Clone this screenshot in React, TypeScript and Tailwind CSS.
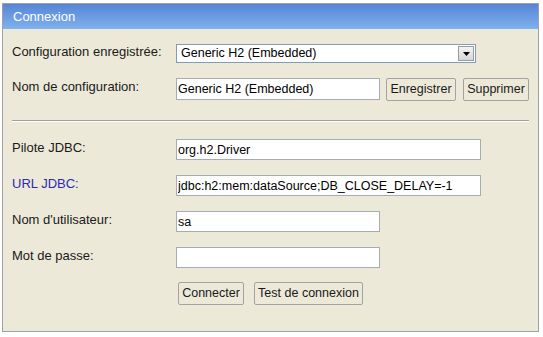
import { useState } from 'react'

const font = "font-['Liberation_Sans',Arial,sans-serif]"

function Field({ label, value, width, blue }: { label: string; value: string; width: string; blue?: boolean }) {
  return (
    <div className="flex items-start">
      <span className={`w-[164px] leading-[15px] pt-[1px] ${blue ? 'text-[#2b2bb8]' : 'text-[#1a1a1a]'}`}>{label}</span>
      <input
        defaultValue={value}
        className={`${width} h-[21px] border border-[#a5acb2] bg-white px-[1px] text-[12.5px] text-black outline-none`}
      />
    </div>
  )
}

function Btn({ children, w }: { children: string; w: string }) {
  return (
    <button className={`${w} h-[23px] rounded-[2px] border border-[#a3a3a3] bg-[#ece9d8] text-[12.5px] text-[#1a1a1a] leading-none`}>
      {children}
    </button>
  )
}

export default function App() {
  const [conf] = useState('Generic H2 (Embedded)')

  return (
    <div className={`w-[543px] h-[337px] bg-white pl-[2px] pt-[3px] text-[13px] ${font}`}>
      <div className="w-[537px] h-[329px] border border-[#a0a0a0] bg-[#ece9d8] flex flex-col">
        {/* Title bar */}
        <div className="h-[25px] bg-gradient-to-b from-[#5785d6] to-[#7fb2ee] text-white pl-[10px] flex items-center">
          Connexion
        </div>

        <div className="pl-[9px] pt-[15px] flex flex-col">
          {/* Saved config */}
          <div className="flex items-start">
            <span className="w-[164px] leading-[15px] text-[#1a1a1a]">Configuration enregistrée:</span>
            <div className="w-[300px] h-[19px] border border-[#7f9db9] bg-white flex items-center justify-between">
              <span className="pl-[4px] leading-none text-[12.5px] text-black">{conf}</span>
              <span className="w-[16px] h-[15px] mr-[1px] border border-[#9a9a9a] bg-gradient-to-b from-[#f4f4f4] to-[#d6d6d6] flex items-center justify-center">
                <svg width="7" height="4" viewBox="0 0 7 4"><path d="M0 0h7L3.5 4z" fill="#000" /></svg>
              </span>
            </div>
          </div>

          {/* Config name */}
          <div className="flex items-start mt-[15px]">
            <span className="w-[164px] leading-[15px] pt-[1px] text-[#1a1a1a]">Nom de configuration:</span>
            <input
              defaultValue={conf}
              className="w-[204px] h-[22px] border border-[#a5acb2] bg-white px-[1px] text-[12.5px] text-black outline-none"
            />
            <div className="flex gap-[7px] ml-[6px]">
              <Btn w="w-[70px]">Enregistrer</Btn>
              <Btn w="w-[66px]">Supprimer</Btn>
            </div>
          </div>

          <div className="mt-[19px] mr-[9px] h-[2px] border-t border-[#a0a0a0] border-b border-b-white" />

          <div className="flex flex-col gap-[15px] mt-[17px]">
            <Field label="Pilote JDBC:" value="org.h2.Driver" width="w-[305px]" />
            <Field label="URL JDBC:" value="jdbc:h2:mem:dataSource;DB_CLOSE_DELAY=-1" width="w-[305px]" blue />
            <Field label="Nom d'utilisateur:" value="sa" width="w-[204px]" />
            <Field label="Mot de passe:" value="" width="w-[204px]" />
          </div>

          <div className="flex gap-[10px] mt-[14px] ml-[166px]">
            <Btn w="w-[66px]">Connecter</Btn>
            <Btn w="w-[109px]">Test de connexion</Btn>
          </div>
        </div>
      </div>
    </div>
  )
}
